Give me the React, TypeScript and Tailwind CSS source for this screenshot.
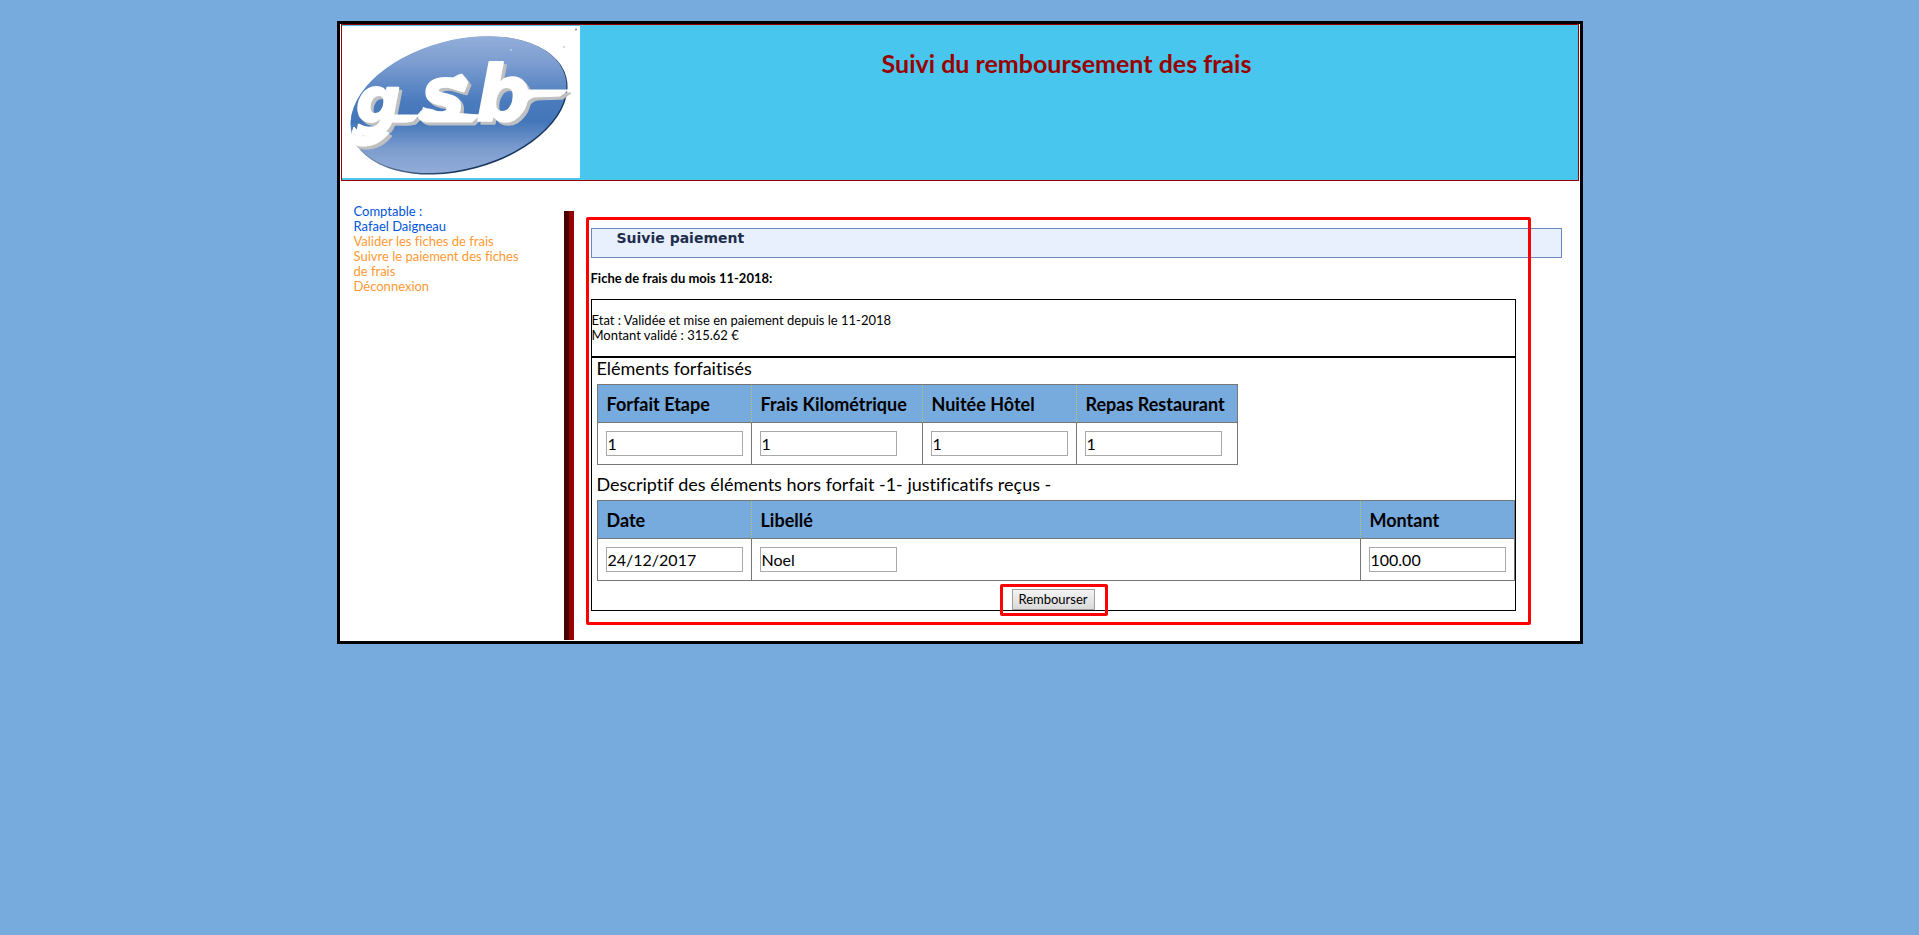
import { ReactNode } from "react";

function Logo() {
  return (
    <svg viewBox="0 0 238 152" className="block h-[152px] w-[238px] shrink-0 bg-white" role="img" aria-label="gsb">
      <defs>
        <linearGradient
          id="oval"
          x1="0"
          y1="9"
          x2="0"
          y2="148"
          gradientUnits="userSpaceOnUse"
          gradientTransform="rotate(15 116.6 78.6)"
        >
          <stop offset="0" stopColor="#94afda" />
          <stop offset="0.2" stopColor="#7c9dd0" />
          <stop offset="0.48" stopColor="#4a7bbd" />
          <stop offset="0.62" stopColor="#4276b9" />
          <stop offset="0.82" stopColor="#7c9ccf" />
          <stop offset="1" stopColor="#93add8" />
        </linearGradient>
        <linearGradient id="rim" x1="0" y1="0" x2="1" y2="1">
          <stop offset="0.3" stopColor="#8499b8" />
          <stop offset="0.7" stopColor="#16365f" />
        </linearGradient>
        <g id="mark">
          <g
            fontFamily="'DejaVu Sans', sans-serif"
            fontStyle="italic"
            fontWeight="700"
            strokeWidth="2"
            strokeLinejoin="round"
          >
            <text x="14" y="96" fontSize="62">g</text>
            <text x="79" y="94" fontSize="74">s</text>
            <text x="134" y="94" fontSize="76">b</text>
          </g>
          <path d="M50 89 L77 89 L71 95 C65 97 57 96 48 96Z" />
          <path d="M76 89 C80 82 86 81 96 86 L138 89 L130 96 L84 96 C79 95 76 93 76 89Z" />
          <path d="M183 64 L226 64 L218 70 L192 71 C186 73 184 77 180 82Z" />
          <path d="M12 101 C8 110 9 119 18 120 C29 121 39 117 47 107 L38 103 C32 109 25 112 20 110Z" />
          <path d="M102 60 C108 54 114 49 120 48 L126 56 L122 66Z" />
        </g>
      </defs>
      <ellipse cx="117" cy="79.5" rx="111" ry="65" transform="rotate(-15 117 79.5)" fill="url(#rim)" />
      <ellipse cx="116.6" cy="78.6" rx="110.3" ry="64.4" transform="rotate(-15 116.6 78.6)" fill="url(#oval)" />
      <use href="#mark" x="3" y="3" fill="#bfc0c2" stroke="#bfc0c2" />
      <use href="#mark" fill="#fff" stroke="#fff" />
      <circle cx="169" cy="24" r="1" fill="#b9cdea" />
      <circle cx="234" cy="3.500" r="1" fill="#8a8a8a" />
      <circle cx="222" cy="21" r="0.700" fill="#9a9a9a" />
    </svg>
  );
}

function Caption({ children }: { children: ReactNode }) {
  return <h4 className="text-lg leading-5">{children}</h4>;
}

type Column = { label: string; value: string; width: string };

function ValueTable({ columns, className }: { columns: Column[]; className: string }) {
  return (
    <table className={`table-fixed border border-[#777] ${className}`}>
      <colgroup>
        {columns.map((c) => (
          <col key={c.label} className={c.width} />
        ))}
      </colgroup>
      <thead>
        <tr className="h-[38px] border-b border-[#777] bg-[#77aadd]">
          {columns.map((c) => (
            <th
              key={c.label}
              scope="col"
              className="border-x border-dotted border-[#b8c860] p-0 pl-[9px] text-left text-lg leading-5 font-bold whitespace-nowrap"
            >
              {c.label}
            </th>
          ))}
        </tr>
      </thead>
      <tbody>
        <tr className="h-[42px]">
          {columns.map((c) => (
            <td key={c.label} className="border-x border-[#777] p-0 pl-2">
              <input
                type="text"
                aria-label={c.label}
                defaultValue={c.value}
                className="block h-[25px] w-[137px] border border-[#a9a9a9] bg-white px-px text-base"
              />
            </td>
          ))}
        </tr>
      </tbody>
    </table>
  );
}

const forfait: Column[] = [
  { label: "Forfait Etape", value: "1", width: "w-[154px]" },
  { label: "Frais Kilométrique", value: "1", width: "w-[171px]" },
  { label: "Nuitée Hôtel", value: "1", width: "w-[154px]" },
  { label: "Repas Restaurant", value: "1", width: "w-[161px]" },
];

const horsForfait: Column[] = [
  { label: "Date", value: "24/12/2017", width: "w-[154px]" },
  { label: "Libellé", value: "Noel", width: "w-auto" },
  { label: "Montant", value: "100.00", width: "w-[154px]" },
];

export default function App() {
  return (
    <div className="min-h-screen bg-[#77aadd] pt-[21px] font-[Lato,sans-serif] text-[13px] leading-[15px] text-black [font-variant-ligatures:none]">
      <div className="mx-auto w-full max-w-[1246px] border-3 border-black bg-white">
        <header className="mx-px flex border border-[#990000] bg-[#48c6ee] pt-px pb-0.5">
          <Logo />
          <h1 className="flex-1 pt-[22px] pr-6 text-center text-[25px] leading-[30px] font-bold text-[#990000]">
            Suivi du remboursement des frais
          </h1>
        </header>

        <div className="flex">
          <nav className="w-[224px] shrink-0 pt-[23px] pr-8 pl-[14px] text-[#ff9933]">
            <p className="text-[#0055dd]">
              Comptable :<br />
              Rafael Daigneau
            </p>
            <ul>
              <li><a href="#valider">Valider les fiches de frais</a></li>
              <li><a href="#suivre">Suivre le paiement des fiches de frais</a></li>
              <li><a href="#deconnexion">Déconnexion</a></li>
            </ul>
          </nav>

          <div className="mt-[30px] mb-px w-[10px] shrink-0 border-r-5 border-l-5 border-r-[#990000] border-l-[#440000]" />

          <main className="min-w-0 flex-1 pt-[47px] pr-[18px] pb-[30px] pl-[17px]">
            <div className="relative">
              <h2 className="h-[30px] border border-[#6b88bf] bg-[#e8effd] pl-[25px] font-['DejaVu_Sans',sans-serif] text-sm leading-[18px] font-bold text-[#1f2d4d]">
                Suivie paiement
              </h2>
              <h3 className="mt-[13px] font-bold">Fiche de frais du mois 11-2018:</h3>

              <form className="mt-[13px] mr-[46px]" onSubmit={(e) => e.preventDefault()}>
                <p className="border border-black py-[13px]">
                  Etat : Validée et mise en paiement depuis le 11-2018
                  <br />
                  Montant validé : 315.62 €
                </p>
                <div className="border border-black">
                  <div className="space-y-1.5 pl-[5px]">
                    <Caption>Eléments forfaitisés</Caption>
                    <ValueTable columns={forfait} className="w-[641px]" />
                  </div>
                  <div className="mt-[9px] space-y-1.5 pl-[5px]">
                    <Caption>Descriptif des éléments hors forfait -1- justificatifs reçus -</Caption>
                    <ValueTable columns={horsForfait} className="w-full" />
                  </div>
                  <div className="mt-2 flex justify-center">
                    <div className="relative">
                      <button
                        type="submit"
                        className="block h-[21px] w-[83px] border border-[#a0a0a0] bg-linear-to-b from-[#f3f3f3] to-[#dadada]"
                      >
                        Rembourser
                      </button>
                      <div className="pointer-events-none absolute -top-[5px] -right-[13px] -bottom-1.5 -left-3 rounded-xs border-3 border-[#ff0000]" />
                    </div>
                  </div>
                </div>
              </form>
              <div className="pointer-events-none absolute -top-[11px] right-[31px] -bottom-[14px] -left-[5px] rounded-xs border-3 border-[#ff0000]" />
            </div>
          </main>
        </div>
      </div>
    </div>
  );
}
